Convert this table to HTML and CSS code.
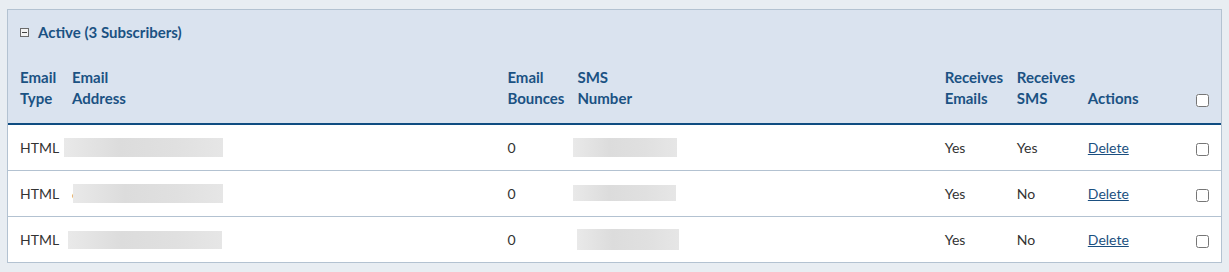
FILE: index.html
```html
<!DOCTYPE html>
<html lang="en">
<head>
  <meta charset="UTF-8">
  <meta name="viewport" content="width=device-width, initial-scale=1">
  <title>Subscribers</title>
  <link rel="stylesheet" href="styles.css">
</head>
<body>

  <div class="panel">
    <div class="panel-title">
      <span class="toggle"></span>
      Active (3 Subscribers)
    </div>

    <table class="subs">
      <colgroup>
        <col class="c-type">
        <col class="c-email">
        <col class="c-bounce">
        <col class="c-sms">
        <col class="c-recv">
        <col class="c-recv-sms">
        <col class="c-actions">
        <col class="c-check">
      </colgroup>
      <thead>
        <tr>
          <th>Email<br>Type</th>
          <th>Email<br>Address</th>
          <th>Email<br>Bounces</th>
          <th>SMS<br>Number</th>
          <th>Receives<br>Emails</th>
          <th>Receives<br>SMS</th>
          <th>Actions</th>
          <th><input type="checkbox"></th>
        </tr>
      </thead>
      <tbody>
        <tr>
          <td>HTML</td>
          <td><span class="hidden-val mail-1"></span></td>
          <td>0</td>
          <td><span class="hidden-val sms-1"></span></td>
          <td>Yes</td>
          <td>Yes</td>
          <td><a href="#">Delete</a></td>
          <td><input type="checkbox"></td>
        </tr>
        <tr>
          <td>HTML</td>
          <td><span class="peek">c</span><span class="hidden-val mail-2"></span></td>
          <td>0</td>
          <td><span class="hidden-val sms-2"></span></td>
          <td>Yes</td>
          <td>No</td>
          <td><a href="#">Delete</a></td>
          <td><input type="checkbox"></td>
        </tr>
        <tr>
          <td>HTML</td>
          <td><span class="hidden-val mail-3"></span></td>
          <td>0</td>
          <td><span class="hidden-val sms-3"></span></td>
          <td>Yes</td>
          <td>No</td>
          <td><a href="#">Delete</a></td>
          <td><input type="checkbox"></td>
        </tr>
      </tbody>
    </table>
  </div>

</body>
</html>
```

FILE: styles.css
```css
body {
  margin: 0;
  padding: 9px 7px 8px 7px;
  background: #e8edf2;
  font-family: Lato, "Noto Sans", sans-serif;
  font-size: 14px;
  color: #333;
}
.panel {
  border: 1px solid #b3c2d1;
  background: #fff;
}
.panel-title {
  background: #dae3ef;
  color: #1b5283;
  font-size: 15px;
  font-weight: bold;
  padding: 0 12px;
  height: 44px;
  display: flex;
  align-items: center;
  gap: 9px;
}
.toggle {
  width: 7px;
  height: 7px;
  border: 1px solid #6b6b6b;
  position: relative;
  background: #f4f4f4;
}
.toggle::after {
  content: "";
  position: absolute;
  left: 1px;
  right: 1px;
  top: 3px;
  height: 1px;
  background: #444;
}
.subs {
  width: 100%;
  border-collapse: collapse;
  table-layout: fixed;
}
.c-type { width: 58px; }
.c-email { width: 435px; }
.c-bounce { width: 70px; }
.c-sms { width: 367px; }
.c-recv { width: 72px; }
.c-recv-sms { width: 71px; }
.c-actions { width: 108px; }
.c-check { width: 31px; }
th, td {
  text-align: left;
  padding: 0 6px;
}
th:first-child, td:first-child {
  padding-left: 12px;
}
th {
  background: #dae3ef;
  color: #1b5283;
  font-size: 15px;
  font-weight: bold;
  line-height: 21px;
  vertical-align: bottom;
  padding-top: 13px;
  padding-bottom: 14px;
  border-bottom: 2px solid #0f4c81;
}
td {
  height: 45px;
  vertical-align: middle;
  border-bottom: 1px solid #b3c2d1;
}
tbody tr:last-child td {
  border-bottom: none;
}
th input, td input {
  margin: 0;
  vertical-align: middle;
}
a {
  color: #1b4f80;
}
.hidden-val {
  display: inline-block;
  vertical-align: middle;
  height: 19px;
  background: linear-gradient(90deg, #e9e9e9, #dcdcdc 35%, #e0e0e0 70%, #e6e6e6);
}
.mail-1 { width: 159px; margin-left: -8px; }
.mail-2 { width: 150px; margin-left: 0; }
.mail-3 { width: 154px; margin-left: -4px; height: 18px; }
.sms-1 { width: 104px; margin-left: -4px; }
.sms-2 { width: 103px; margin-left: -4px; height: 16px; margin-top: -4px; }
.sms-3 { width: 102px; height: 21px; }
.peek {
  color: #8a6f5a;
  font-size: 12px;
  vertical-align: middle;
}
.peek + .hidden-val {
  margin-left: -5px;
}
```
